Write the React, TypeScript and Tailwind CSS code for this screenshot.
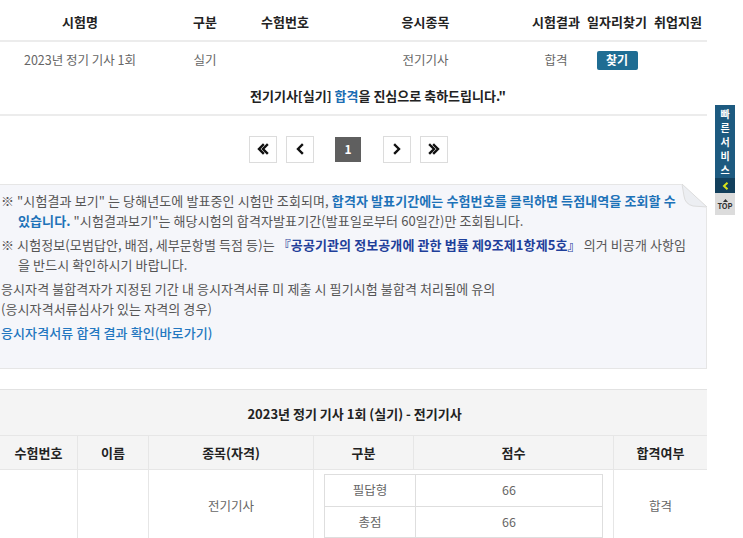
import React from "react";

const topCols = "grid grid-cols-[160px_90px_70px_211px_50px_72px_50px]";

function PageBtn({ children, active }: { children: React.ReactNode; active?: boolean }) {
  if (active) {
    return (
      <div className="w-[26px] h-[25px] bg-[#5f5f5f] text-white text-[12px] font-bold flex items-center justify-center">
        {children}
      </div>
    );
  }
  return (
    <div className="w-[28px] h-[27px] border border-[#dcdcdc] bg-white flex items-center justify-center text-[#111]">
      {children}
    </div>
  );
}

function Chev({ dir, double }: { dir: "l" | "r"; double?: boolean }) {
  const one = dir === "l" ? "M7 2 L3 6 L7 10" : "M3 2 L7 6 L3 10";
  const two = dir === "l" ? "M11 2 L7 6 L11 10" : "M7 2 L11 6 L7 10";
  return (
    <svg width={double ? 14 : 10} height="12" viewBox={double ? "0 0 14 12" : "0 0 10 12"} fill="none">
      <path d={one} stroke="#111" strokeWidth="2.4" strokeLinecap="square" />
      {double && <path d={two} stroke="#111" strokeWidth="2.4" strokeLinecap="square" />}
    </svg>
  );
}

export default function App() {
  return (
    <div className="relative w-[743px] h-[538px] overflow-hidden bg-white font-['Noto_Sans_CJK_KR','Noto_Sans',sans-serif] text-[#555]">
      <div className="w-[707px]">
        {/* result list */}
        <div className={`${topCols} h-[42px] items-center pt-[3px] border-b-2 border-[#ececec] text-[13px] font-bold text-[#222] text-center`}>
          <div>시험명</div>
          <div>구분</div>
          <div>수험번호</div>
          <div>응시종목</div>
          <div>시험결과</div>
          <div>일자리찾기</div>
          <div>취업지원</div>
        </div>
        <div className={`${topCols} h-[36px] items-center text-[12.5px] text-[#666] text-center`}>
          <div>2023년 정기 기사 1회</div>
          <div>실기</div>
          <div></div>
          <div>전기기사</div>
          <div>합격</div>
          <div className="flex justify-center">
            <span className="w-[41px] h-[19px] rounded-[2px] bg-[#1f6d93] text-white text-[12px] font-bold flex items-center justify-center">
              찾기
            </span>
          </div>
          <div></div>
        </div>

        <div className="h-[38px] border-b-2 border-[#ececec] flex items-center pl-[250px] text-[13px] font-bold text-[#222] whitespace-pre">
          전기기사[실기] <span className="text-[#1b6db3]">합격</span>을 진심으로 축하드립니다."
        </div>

        {/* pagination */}
        <div className="h-[68px] flex items-center justify-center pr-[10px] pb-[2px]">
          <PageBtn><Chev dir="l" double /></PageBtn>
          <div className="w-[9px]" />
          <PageBtn><Chev dir="l" /></PageBtn>
          <div className="w-[21px]" />
          <PageBtn active>1</PageBtn>
          <div className="w-[22px]" />
          <PageBtn><Chev dir="r" /></PageBtn>
          <div className="w-[9px]" />
          <PageBtn><Chev dir="r" double /></PageBtn>
        </div>

        {/* notice */}
        <div className="relative h-[185px] border border-[#e6e6e6] border-l-0 bg-[#f5f6fa] pt-[6px] pl-[1px] text-[13px] tracking-[0.1px] leading-[20px] text-[#555] whitespace-nowrap">
          <p className="pl-[17px] -indent-[17px] mb-[4px]">
            ※ "시험결과 보기" 는 당해년도에 발표중인 시험만 조회되며,{" "}
            <span className="text-[#1d72b8] font-semibold">합격자 발표기간에는 수험번호를 클릭하면 득점내역을 조회할 수</span>
            <br />
            <span className="text-[#1d72b8] font-semibold">있습니다.</span> "시험결과보기"는 해당시험의 합격자발표기간(발표일로부터 60일간)만 조회됩니다.
          </p>
          <p className="pl-[17px] -indent-[17px] mb-[4px]">
            ※ 시험정보(모범답안, 배점, 세부문항별 득점 등)는{" "}
            <span className="text-[#1f3f9a] font-bold">『공공기관의 정보공개에 관한 법률 제9조제1항제5호』</span> 의거 비공개 사항임
            <br />을 반드시 확인하시기 바랍니다.
          </p>
          <p className="mb-[4px]">
            응시자격 불합격자가 지정된 기간 내 응시자격서류 미 제출 시 필기시험 불합격 처리됨에 유의
            <br />
            (응시자격서류심사가 있는 자격의 경우)
          </p>
          <p className="text-[#2377c0] font-medium">응시자격서류 합격 결과 확인(바로가기)</p>

          {/* folded corner */}
          <svg className="absolute -right-px -top-px" width="26" height="24" viewBox="0 0 26 24">
            <path d="M0 0 L26 0 L26 24 Z" fill="#ffffff" />
            <path d="M1 0 L26 23 L12 22 Q4 20 3 12 Z" fill="#eceef2" stroke="#dcdcdc" strokeWidth="1" />
          </svg>
        </div>

        {/* score table */}
        <div className="mt-[20px] border-t border-[#e2e2e2] text-[13px]">
          <div className="h-[45px] bg-[#f4f4f4] flex items-center justify-center font-bold text-[#222] pt-[2px] pl-[2px]">
            2023년 정기 기사 1회 (실기) - 전기기사
          </div>
          <div className="grid grid-cols-[77px_71px_165px_100px_200px_94px] h-[34px] bg-[#f4f4f4] border-t border-[#e6e6e6] font-bold text-[#222] text-center">
            <div className="flex items-center justify-center">수험번호</div>
            <div className="flex items-center justify-center border-l border-[#e6e6e6]">이름</div>
            <div className="flex items-center justify-center border-l border-[#e6e6e6]">종목(자격)</div>
            <div className="flex items-center justify-center border-l border-[#e6e6e6]">구분</div>
            <div className="flex items-center justify-center border-l border-[#e6e6e6]">점수</div>
            <div className="flex items-center justify-center border-l border-[#e6e6e6]">합격여부</div>
          </div>
          <div className="grid grid-cols-[77px_71px_165px_300px_94px] border-t border-[#e6e6e6] text-[12.5px] text-[#666] text-center">
            <div></div>
            <div className="border-l border-[#e6e6e6]"></div>
            <div className="border-l border-[#e6e6e6] flex items-center justify-center">전기기사</div>
            <div className="border-l border-[#e6e6e6] px-[10px] py-[4px]">
              <div className="grid grid-cols-[90px_1fr] border border-[#dedede]">
                <div className="h-[31px] flex items-center justify-center">필답형</div>
                <div className="h-[31px] flex items-center justify-center border-l border-[#dedede]">66</div>
                <div className="h-[31px] flex items-center justify-center border-t border-[#dedede]">총점</div>
                <div className="h-[31px] flex items-center justify-center border-t border-l border-[#dedede]">66</div>
              </div>
            </div>
            <div className="border-l border-[#e6e6e6] flex items-center justify-center">합격</div>
          </div>
        </div>
      </div>

      {/* quick service bar */}
      <div className="absolute left-[715px] top-[105px] w-[20px] flex flex-col">
        <div className="h-[73px] bg-[#1d5a80] flex flex-col items-center justify-center text-white text-[10px] font-bold leading-[14px]">
          <span className="h-[14px]">빠</span>
          <span className="h-[14px]">른</span>
          <span className="h-[14px]">서</span>
          <span className="h-[14px]">비</span>
          <span className="h-[14px]">스</span>
        </div>
        <div className="h-[15px] bg-[#123f5c] flex items-center justify-center">
          <svg width="7" height="8" viewBox="0 0 7 8">
            <path d="M5.5 0.8 L2 4 L5.5 7.2" stroke="#d8e21a" strokeWidth="2" fill="none" />
          </svg>
        </div>
        <div className="h-[22px] bg-[#dcdcdc] flex flex-col items-center justify-center text-[7.5px] font-bold text-[#333] leading-[8px]">
          <svg width="5" height="3" viewBox="0 0 5 3">
            <path d="M0 3 L2.5 0 L5 3 Z" fill="#333" />
          </svg>
          <span>TOP</span>
        </div>
      </div>
    </div>
  );
}
